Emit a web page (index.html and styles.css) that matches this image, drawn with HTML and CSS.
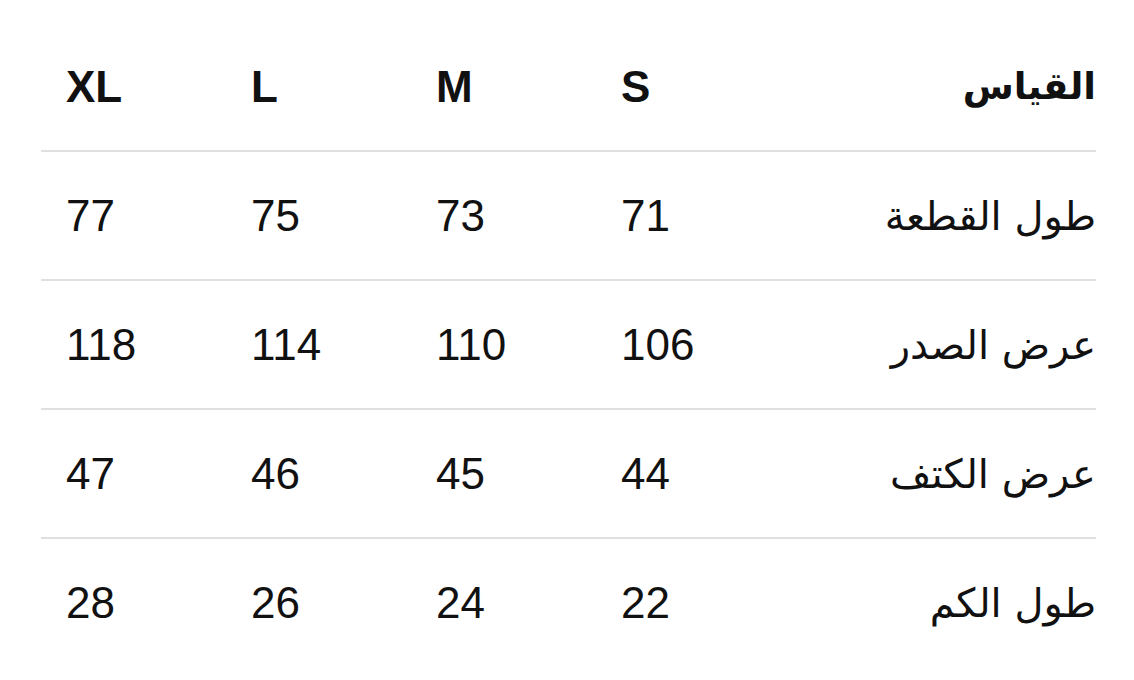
FILE: index.html
```html
<!DOCTYPE html>
<html lang="ar" dir="rtl">
<head>
<meta charset="utf-8">
<link rel="stylesheet" href="styles.css">
</head>
<body>
<div class="size-table">
  <div class="row head">
    <div class="label">القياس</div>
    <div class="val">S</div>
    <div class="val">M</div>
    <div class="val">L</div>
    <div class="val">XL</div>
  </div>
  <div class="row">
    <div class="label">طول القطعة</div>
    <div class="val">71</div>
    <div class="val">73</div>
    <div class="val">75</div>
    <div class="val">77</div>
  </div>
  <div class="row">
    <div class="label">عرض الصدر</div>
    <div class="val">106</div>
    <div class="val">110</div>
    <div class="val">114</div>
    <div class="val">118</div>
  </div>
  <div class="row">
    <div class="label">عرض الكتف</div>
    <div class="val">44</div>
    <div class="val">45</div>
    <div class="val">46</div>
    <div class="val">47</div>
  </div>
  <div class="row last">
    <div class="label">طول الكم</div>
    <div class="val">22</div>
    <div class="val">24</div>
    <div class="val">26</div>
    <div class="val">28</div>
  </div>
</div>
</body>
</html>
```
FILE: styles.css
```css
html, body {
  margin: 0;
  padding: 0;
  background: #ffffff;
}
body {
  padding: 23px 38px 0 41px;
  font-family: "Liberation Sans", "DejaVu Sans", sans-serif;
  color: #111111;
}
.size-table {
  width: 1055px;
  display: flex;
  flex-direction: column;
}
.row {
  display: grid;
  grid-template-columns: 315px 185px 185px 185px 185px;
  height: 127px;
  align-items: center;
  border-bottom: 2px solid #e0e0e0;
  font-size: 44px;
}
.row.last {
  border-bottom: none;
}
.label {
  text-align: right;
  font-family: "DejaVu Sans", sans-serif;
  font-size: 40px;
}
.val {
  direction: ltr;
  text-align: left;
  padding-left: 25px;
}
.head {
  font-weight: 700;
}
.head .label {
  font-weight: 700;
  font-size: 37px;
}
```
